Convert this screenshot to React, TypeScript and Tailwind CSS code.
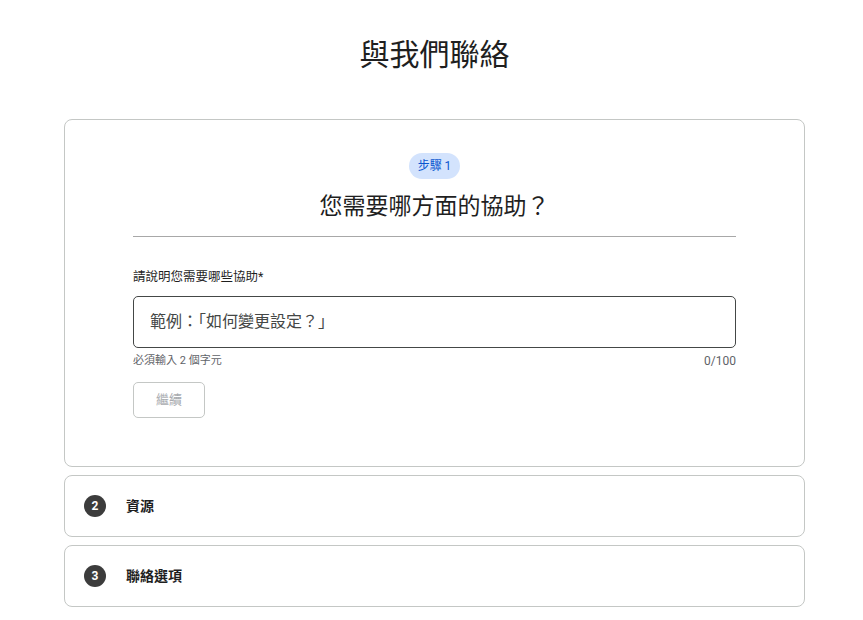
const font = { fontFamily: '"Roboto", "Noto Sans CJK TC", sans-serif' };

function StepRow({ n, label }: { n: number; label: string }) {
  return (
    <div className="h-[62px] rounded-lg border border-[#c4c7c5] bg-white flex items-center pl-[19px]">
      <div className="w-[22px] h-[22px] rounded-full bg-[#3c3c3c] text-white text-[12px] font-bold flex items-center justify-center">
        {n}
      </div>
      <span className="ml-[20px] text-[14px] font-bold text-[#1f1f1f]">{label}</span>
    </div>
  );
}

function App() {
  return (
    <div className="min-h-screen bg-white" style={font}>
      <h1 className="pt-[34px] h-[119px] pl-[6px] text-center text-[30px] leading-[42px] text-[#1f1f1f]">與我們聯絡</h1>

      <div className="mx-[64px] w-[741px] flex flex-col gap-[8px]">
        <div className="rounded-lg border border-[#c4c7c5] px-[68px] pt-[33px] pb-[48px]">
          <div className="flex justify-center">
            <span className="h-[26px] px-[9px] rounded-full bg-[#d3e3fd] text-[#0b57d0] text-[12px] font-normal flex items-center">
              步驟 1
            </span>
          </div>
          <h2 className="mt-[14px] text-center text-[23px] leading-[28px] text-[#1f1f1f]">您需要哪方面的協助？</h2>
          <div className="mt-[15px] border-t border-[#a8a8a8]" />

          <label className="block mt-[31px] text-[12.5px] leading-[18px] text-[#1f1f1f]">請說明您需要哪些協助*</label>
          <div className="mt-[10px] h-[52px] rounded-[5px] border border-[#444746] flex items-center px-[16px]">
            <span className="text-[16px] text-[#444746]">範例：「如何變更設定？」</span>
          </div>
          <div className="mt-[5px] flex justify-between text-[11px] leading-[16px] text-[#5f6368]">
            <span>必須輸入 2 個字元</span>
            <span className="text-[12px]">0/100</span>
          </div>
          <button className="mt-[13px] w-[72px] h-[36px] rounded-[5px] border border-[#c4c7c5] text-[13px] text-[#a8abaf]">
            繼續
          </button>
        </div>

        <StepRow n={2} label="資源" />
        <StepRow n={3} label="聯絡選項" />
      </div>
    </div>
  );
}

export default App;
